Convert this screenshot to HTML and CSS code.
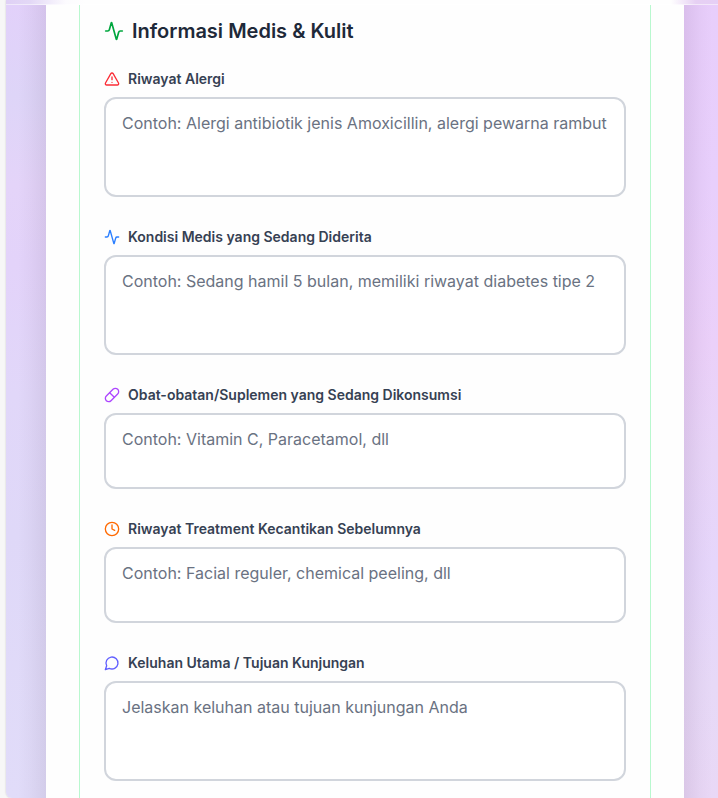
FILE: index.html
```
<!DOCTYPE html>
<html lang="id">
<head>
<meta charset="utf-8">
<title>Informasi Medis &amp; Kulit</title>
<link rel="stylesheet" href="styles.css">
</head>
<body>
<div class="window">
  <header class="topbar"></header>
  <main class="backdrop">
    <div class="card">
      <section class="panel">
        <h2 class="title">
          <svg class="icon icon-lg green" viewBox="0 0 24 24"><path d="M22 12h-2.48a2 2 0 0 0-1.93 1.46l-2.35 8.36a.25.25 0 0 1-.48 0L9.24 2.18a.25.25 0 0 0-.48 0l-2.35 8.36A2 2 0 0 1 4.49 12H2"/></svg>
          Informasi Medis &amp; Kulit
        </h2>
        <div class="fields">
          <div class="field">
            <label class="label" for="alergi">
              <svg class="icon red" viewBox="0 0 24 24"><path d="m21.73 18-8-14a2 2 0 0 0-3.48 0l-8 14A2 2 0 0 0 4 21h16a2 2 0 0 0 1.73-3"/><path d="M12 9v4"/><path d="M12 17h.01"/></svg>
              Riwayat Alergi
            </label>
            <textarea class="input tall" id="alergi" placeholder="Contoh: Alergi antibiotik jenis Amoxicillin, alergi pewarna rambut"></textarea>
          </div>
          <div class="field">
            <label class="label" for="kondisi">
              <svg class="icon blue" viewBox="0 0 24 24"><path d="M22 12h-2.48a2 2 0 0 0-1.93 1.46l-2.35 8.36a.25.25 0 0 1-.48 0L9.24 2.18a.25.25 0 0 0-.48 0l-2.35 8.36A2 2 0 0 1 4.49 12H2"/></svg>
              Kondisi Medis yang Sedang Diderita
            </label>
            <textarea class="input tall" id="kondisi" placeholder="Contoh: Sedang hamil 5 bulan, memiliki riwayat diabetes tipe 2"></textarea>
          </div>
          <div class="field">
            <label class="label" for="obat">
              <svg class="icon purple" viewBox="0 0 24 24"><path d="m10.5 20.5 10-10a4.95 4.95 0 1 0-7-7l-10 10a4.95 4.95 0 1 0 7 7Z"/><path d="m8.5 8.5 7 7"/></svg>
              Obat-obatan/Suplemen yang Sedang Dikonsumsi
            </label>
            <textarea class="input" id="obat" placeholder="Contoh: Vitamin C, Paracetamol, dll"></textarea>
          </div>
          <div class="field">
            <label class="label" for="treatment">
              <svg class="icon orange" viewBox="0 0 24 24"><circle cx="12" cy="12" r="10"/><path d="M12 6v6l4 2"/></svg>
              Riwayat Treatment Kecantikan Sebelumnya
            </label>
            <textarea class="input" id="treatment" placeholder="Contoh: Facial reguler, chemical peeling, dll"></textarea>
          </div>
          <div class="field">
            <label class="label" for="keluhan">
              <svg class="icon indigo" viewBox="0 0 24 24"><path d="M7.9 20A9 9 0 1 0 4 16.1L2 22Z"/></svg>
              Keluhan Utama / Tujuan Kunjungan
            </label>
            <textarea class="input tall" id="keluhan" placeholder="Jelaskan keluhan atau tujuan kunjungan Anda"></textarea>
          </div>
        </div>
      </section>
    </div>
  </main>
</div>
</body>
</html>
```
FILE: styles.css
```
* { box-sizing: border-box; }

body {
  margin: 0;
  height: 798px;
  overflow: hidden;
  background: #f7f7f7;
  font-family: Inter, "Liberation Sans", sans-serif;
}

.window {
  display: flex;
  flex-direction: column;
  height: 798px;
  margin-left: 6px;
  border-bottom-left-radius: 6px;
  overflow: hidden;
  box-shadow: 0 0 2px rgba(0, 0, 0, 0.2);
}

.topbar {
  flex: none;
  height: 5px;
  border-bottom: 1px solid rgba(255, 255, 255, 0.5);
  background: linear-gradient(90deg, #dfd0f5 0, #e3d8f6 24px, #fcfbfe 60px, #fefefe 80px, #fefefe 665px, #e6d0f3 690px, #e6cff6 100%);
}

.backdrop {
  flex: 1;
  display: flex;
  padding: 0 34px 0 40px;
  background:
    linear-gradient(90deg, transparent 12px, rgba(70, 50, 80, 0.03) 24px, rgba(70, 50, 80, 0.09) 40px, transparent 40px, transparent 678px, rgba(90, 50, 100, 0.1) 678px, rgba(90, 50, 100, 0.03) 694px, transparent 706px),
    linear-gradient(180deg, #e2d1fa 0, #ded5f8 90px, #e4d4f9 180px, #e3d3fa 260px, #e1d7f9 390px, #dfd8f8 530px, #e1dcf9 100%) left / 50% 100% no-repeat,
    linear-gradient(180deg, #e8cefb 0, #e8cffc 180px, #ebd0f9 340px, #e8d5f8 450px, #e6d6fb 560px, #e7d9f7 680px, #e9d8f6 100%) right / 50% 100% no-repeat;
}

.card {
  flex: 1;
  display: flex;
  padding: 0 33px;
  background: #fefefe;
}

.panel {
  flex: 1;
  padding: 12px 24px 0;
  border: solid #b9f8cf;
  border-width: 0 1px;
}

.title {
  display: flex;
  align-items: center;
  gap: 8px;
  margin: 0 0 24px;
  font-size: 20px;
  line-height: 28px;
  font-weight: 600;
  color: #1e2939;
}

.fields {
  display: flex;
  flex-direction: column;
  gap: 30px;
}

.field {
  display: flex;
  flex-direction: column;
  gap: 8px;
}

.label {
  display: flex;
  align-items: center;
  gap: 8px;
  font-size: 14px;
  line-height: 20px;
  font-weight: 600;
  color: #364153;
}

.icon {
  flex: none;
  width: 16px;
  height: 16px;
  fill: none;
  stroke: currentColor;
  stroke-width: 2;
  stroke-linecap: round;
  stroke-linejoin: round;
}

.icon-lg { width: 20px; height: 20px; }

.green { color: #00a63e; }
.red { color: #fb2c36; }
.blue { color: #2b7fff; }
.purple { color: #ad46ff; }
.orange { color: #ff6900; }
.indigo { color: #615fff; }

.input {
  display: block;
  width: 100%;
  height: 76px;
  margin: 0;
  padding: 12px 16px;
  border: 2px solid #d1d5dc;
  border-radius: 12px;
  outline: none;
  resize: none;
  overflow: hidden;
  background: #fff;
  font: 400 16px/24px Inter, "Liberation Sans", sans-serif;
  color: #1e2939;
}

.input::placeholder { color: #6a7282; opacity: 1; }

.tall { height: 100px; }
```
